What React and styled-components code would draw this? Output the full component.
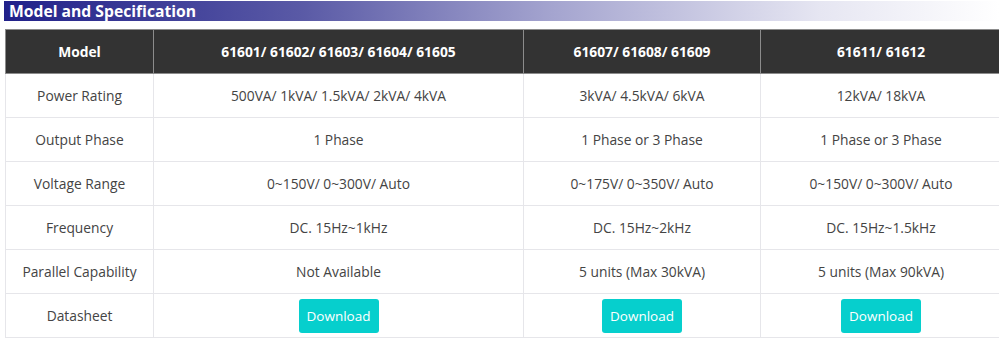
import React from 'react'
import styled, { createGlobalStyle } from 'styled-components'

const GlobalStyle = createGlobalStyle`
  body {
    margin: 0;
    background: #fff;
    font-family: 'Open Sans', 'Liberation Sans', sans-serif;
  }
`

const Page = styled.div`
  width: 999px;
  height: 340px;
  overflow: hidden;
  padding: 1px 0 0 4px;
  box-sizing: border-box;
`

const TitleBar = styled.div`
  height: 20px;
  display: flex;
  align-items: center;
  padding-left: 5px;
  background: linear-gradient(90deg, #21218a 0%, #5a5aa6 30%, #a4a4cf 55%, #e6e6f2 82%, #ffffff 100%);
  h2 {
    margin: 0;
    font-size: 15.7px;
    font-weight: 700;
    color: #fff;
  }
`

const Table = styled.table`
  margin-top: 8px;
  margin-left: 1px;
  width: 996px;
  border-collapse: collapse;
  table-layout: fixed;
  font-size: 13.8px;
  color: #444;
`

const HeadCell = styled.th`
  height: 43px;
  background: #333;
  color: #fff;
  font-weight: 700;
  font-size: 13.8px;
  border: 1px solid #8c8c8c;
  text-align: center;
  padding: 0;
`

const Cell = styled.td`
  height: 43px;
  border: 1px solid #e6e6ea;
  text-align: center;
  padding: 0;
  font-weight: 400;
`

const Button = styled.a`
  display: inline-block;
  width: 80px;
  height: 34px;
  line-height: 34px;
  border-radius: 3px;
  background: #06cfcd;
  color: #fff;
  text-decoration: none;
  font-size: 13.5px;
`

const columns = ['Model', '61601/ 61602/ 61603/ 61604/ 61605', '61607/ 61608/ 61609', '61611/ 61612']
const widths = [148, 370, 237, 241]

const rows = [
  ['Power Rating', '500VA/ 1kVA/ 1.5kVA/ 2kVA/ 4kVA', '3kVA/ 4.5kVA/ 6kVA', '12kVA/ 18kVA'],
  ['Output Phase', '1 Phase', '1 Phase or 3 Phase', '1 Phase or 3 Phase'],
  ['Voltage Range', '0~150V/ 0~300V/ Auto', '0~175V/ 0~350V/ Auto', '0~150V/ 0~300V/ Auto'],
  ['Frequency', 'DC. 15Hz~1kHz', 'DC. 15Hz~2kHz', 'DC. 15Hz~1.5kHz'],
  ['Parallel Capability', 'Not Available', '5 units (Max 30kVA)', '5 units (Max 90kVA)'],
]

function App() {
  return (
    <Page>
      <GlobalStyle />
      <TitleBar>
        <h2>Model and Specification</h2>
      </TitleBar>
      <Table>
        <colgroup>
          {widths.map((w, i) => <col key={i} style={{ width: w }} />)}
        </colgroup>
        <thead>
          <tr>
            {columns.map(c => <HeadCell key={c}>{c}</HeadCell>)}
          </tr>
        </thead>
        <tbody>
          {rows.map(r => (
            <tr key={r[0]}>
              {r.map((v, i) => <Cell key={i}>{v}</Cell>)}
            </tr>
          ))}
          <tr>
            <Cell>Datasheet</Cell>
            <Cell><Button href="#">Download</Button></Cell>
            <Cell><Button href="#">Download</Button></Cell>
            <Cell><Button href="#">Download</Button></Cell>
          </tr>
        </tbody>
      </Table>
    </Page>
  )
}

export default App
